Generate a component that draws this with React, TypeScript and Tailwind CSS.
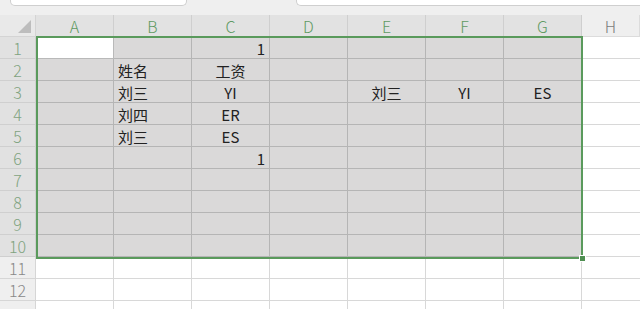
import React from 'react';

const cols = ['A', 'B', 'C', 'D', 'E', 'F', 'G', 'H'];

type Cell = { text: string; align: 'left' | 'center' | 'right' };

const data: Record<string, Cell> = {
  C1: { text: '1', align: 'right' },
  B2: { text: '姓名', align: 'left' },
  C2: { text: '工资', align: 'center' },
  B3: { text: '刘三', align: 'left' },
  C3: { text: 'YI', align: 'center' },
  E3: { text: '刘三', align: 'center' },
  F3: { text: 'YI', align: 'center' },
  G3: { text: 'ES', align: 'center' },
  B4: { text: '刘四', align: 'left' },
  C4: { text: 'ER', align: 'center' },
  B5: { text: '刘三', align: 'left' },
  C5: { text: 'ES', align: 'center' },
  C6: { text: '1', align: 'right' },
};

const rows = Array.from({ length: 13 }, (_, i) => i + 1);

export default function App() {
  return (
    <div
      className="h-[309px] w-[640px] overflow-hidden bg-[#efefef]"
      style={{ fontFamily: '"Noto Sans CJK SC", "Noto Sans", sans-serif' }}
    >
      {/* top bar with name box / formula box */}
      <div className="flex h-[15px] items-start">
        <div className="ml-[10px] h-[6px] w-[177px] rounded-b-[5px] border-x border-b border-[#cfcfcf] bg-white" />
        <div className="ml-[109px] h-[6px] flex-1 rounded-bl-[5px] border-b border-l border-[#cfcfcf] bg-white" />
      </div>

      <div className="relative">
        <div className="grid grid-cols-[36px_repeat(7,78px)_1fr] grid-rows-[22px_repeat(13,22px)]">
          {/* corner */}
          <div className="flex items-end justify-end border-b border-r border-[#d4d4d4] bg-[#e9e9e9] pb-[3px] pr-[4px]">
            <svg width="13" height="13" viewBox="0 0 13 13" className="block">
              <path d="M13 0 L13 13 L0 13 Z" fill="#bdbdbd" />
            </svg>
          </div>
          {cols.map((c) => (
            <div
              key={c}
              className={`flex items-center justify-center border-b border-r text-[16px] font-light ${
                c === 'H'
                  ? 'border-[#dcdcdc] bg-[#efefef] text-[#7c7c7c]'
                  : 'border-[#cfcfcf] bg-[#e2e2e2] text-[#5f9a62]'
              }`}
            >
              {c}
            </div>
          ))}

          {rows.map((r) => {
            const inSel = r <= 10;
            return (
              <React.Fragment key={r}>
                <div
                  className={`flex items-center justify-center border-b border-r text-[16px] font-light ${
                    inSel
                      ? 'border-[#cfcfcf] bg-[#e1e1e1] text-[#7fa37f]'
                      : 'border-[#d6d6d6] bg-[#efefef] text-[#888888]'
                  }`}
                >
                  {r <= 12 ? r : ''}
                </div>
                {cols.map((c) => {
                  const key = `${c}${r}`;
                  const cell = data[key];
                  const selected = inSel && c !== 'H';
                  const active = key === 'A1';
                  return (
                    <div
                      key={key}
                      className={`flex items-center overflow-hidden px-[4px] pt-[1px] text-[15px] leading-none text-[#222222] ${
                        c === 'H' ? 'border-b' : 'border-b border-r'
                      } ${
                        active
                          ? 'border-[#b9b9b9] bg-white'
                          : selected
                            ? 'border-[#b5b5b5] bg-[#dad9d9]'
                            : 'border-[#d8d8d8] bg-white'
                      } ${
                        cell?.align === 'right'
                          ? 'justify-end'
                          : cell?.align === 'center'
                            ? 'justify-center'
                            : 'justify-start'
                      }`}
                    >
                      {cell?.text}
                    </div>
                  );
                })}
              </React.Fragment>
            );
          })}
        </div>

        {/* selection outline */}
        <div className="pointer-events-none absolute left-[36px] top-[21px] h-[223px] w-[547px] border-2 border-[#5a9a5c]" />
        {/* fill handle */}
        <div className="pointer-events-none absolute left-[580px] top-[241px] h-[5px] w-[5px] bg-[#4f8f52] outline outline-1 outline-white" />
      </div>
    </div>
  );
}
